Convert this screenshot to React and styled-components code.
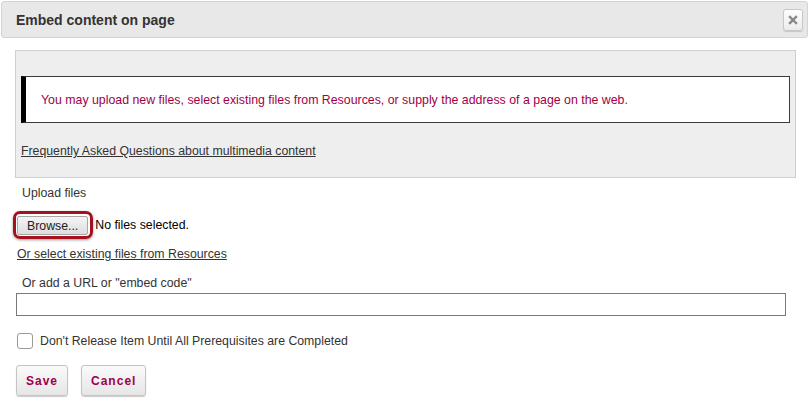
import React from 'react';
import styled, { createGlobalStyle } from 'styled-components';

const GlobalStyle = createGlobalStyle`
  html, body {
    margin: 0;
    padding: 0;
    background: #fff;
  }
  body {
    font-family: "Liberation Sans", Arial, sans-serif;
    font-size: 12px;
    color: #333;
  }
`;

const Dialog = styled.div`
  width: 812px;
  height: 418px;
  box-sizing: border-box;
  padding: 1px 4px 0 1px;
`;

const Header = styled.div`
  display: flex;
  align-items: center;
  justify-content: space-between;
  height: 37px;
  box-sizing: border-box;
  padding: 0 4px 0 14px;
  background: #e8e8e8;
  border: 1px solid #d4d4d4;
  border-radius: 3px;
`;

const Title = styled.h2`
  margin: 0;
  font-size: 14px;
  font-weight: bold;
  color: #333;
`;

const CloseButton = styled.button`
  width: 20px;
  height: 22px;
  padding: 0;
  display: flex;
  align-items: center;
  justify-content: center;
  background: linear-gradient(#fdfdfd, #ececec);
  border: 1px solid #c8c8c8;
  border-radius: 3px;
  box-shadow: 0 1px 1px rgba(0, 0, 0, 0.15);
`;

const Body = styled.div`
  padding: 12px 0 0 14px;
`;

const InfoPanel = styled.div`
  width: 781px;
  height: 128px;
  box-sizing: border-box;
  background: #eeeeee;
  border: 1px solid #cfcfcf;
  padding: 25px 5px 0 5px;
`;

const Message = styled.div`
  height: 47px;
  box-sizing: border-box;
  display: flex;
  align-items: center;
  background: #fff;
  border: 1px solid #3a3a3a;
  border-left: 5px solid #000;
  padding-left: 15px;
  color: #a0004a;
  font-size: 12.35px;
`;

const FaqLink = styled.a`
  display: inline-block;
  margin-top: 21px;
  color: #333;
  text-decoration: underline;
  font-size: 12.3px;
`;

const FieldLabel = styled.div`
  margin: ${({ $mt }) => $mt} 0 0 7px;
  font-size: 12.3px;
  color: #333;
  line-height: 14px;
`;

const UploadRow = styled.div`
  display: flex;
  align-items: center;
  margin-top: 11px;
`;

const Highlight = styled.div`
  margin-left: -2px;
  padding: 2px 2px 1px 1px;
  border: 3px solid #a2111d;
  border-radius: 7px;
  box-shadow: 0 1px 3px rgba(0, 0, 0, 0.4);
  display: flex;
`;

const BrowseButton = styled.button`
  height: 19px;
  padding: 0 9px;
  font-family: inherit;
  font-size: 12.3px;
  color: #222;
  background: linear-gradient(#f4f4f4, #dedede);
  border: 1px solid #a8a8a8;
  border-radius: 2px;
`;

const FileState = styled.span`
  margin-left: 2px;
  font-size: 12.3px;
  color: #000;
`;

const ResourcesLink = styled.a`
  display: inline-block;
  margin: 8px 0 0 2px;
  color: #333;
  text-decoration: underline;
  font-size: 12.3px;
`;

const UrlInput = styled.input`
  display: block;
  width: 770px;
  height: 23px;
  box-sizing: border-box;
  margin: 3px 0 0 1px;
  border: 1px solid #7a7a7a;
  background: #fff;
`;

const CheckRow = styled.label`
  display: flex;
  align-items: center;
  gap: 7px;
  margin: 17px 0 0 2px;
  font-size: 12.3px;
  color: #333;
`;

const Box = styled.span`
  width: 14px;
  height: 14px;
  border: 1px solid #9a9a9a;
  border-radius: 3px;
  background: #fff;
`;

const Actions = styled.div`
  display: flex;
  gap: 13px;
  margin: 16px 0 0 1px;
`;

const ActionButton = styled.button`
  height: 31px;
  padding: 0 9px;
  font-family: inherit;
  font-size: 12px;
  font-weight: bold;
  letter-spacing: 1px;
  color: #a0004a;
  background: linear-gradient(#fafafa, #e6e6e6);
  border: 1px solid #c4c4c4;
  border-radius: 3px;
  box-shadow: 0 1px 1px rgba(0, 0, 0, 0.2);
`;

const App = () => (
  <>
    <GlobalStyle />
    <Dialog>
      <Header>
        <Title>Embed content on page</Title>
        <CloseButton aria-label="close">
          <svg width="10" height="10" viewBox="0 0 10 10">
            <path d="M2 2L8 8M8 2L2 8" stroke="#888" strokeWidth="2.4" strokeLinecap="square" />
          </svg>
        </CloseButton>
      </Header>
      <Body>
        <InfoPanel>
          <Message>
            You may upload new files, select existing files from Resources, or supply the address of a page on the web.
          </Message>
          <FaqLink href="#">Frequently Asked Questions about multimedia content</FaqLink>
        </InfoPanel>
        <FieldLabel $mt="8px">Upload files</FieldLabel>
        <UploadRow>
          <Highlight>
            <BrowseButton>Browse...</BrowseButton>
          </Highlight>
          <FileState>No files selected.</FileState>
        </UploadRow>
        <ResourcesLink href="#">Or select existing files from Resources</ResourcesLink>
        <FieldLabel $mt="15px">Or add a URL or "embed code"</FieldLabel>
        <UrlInput type="text" />
        <CheckRow>
          <Box />
          Don't Release Item Until All Prerequisites are Completed
        </CheckRow>
        <Actions>
          <ActionButton>Save</ActionButton>
          <ActionButton>Cancel</ActionButton>
        </Actions>
      </Body>
    </Dialog>
  </>
);

export default App;
